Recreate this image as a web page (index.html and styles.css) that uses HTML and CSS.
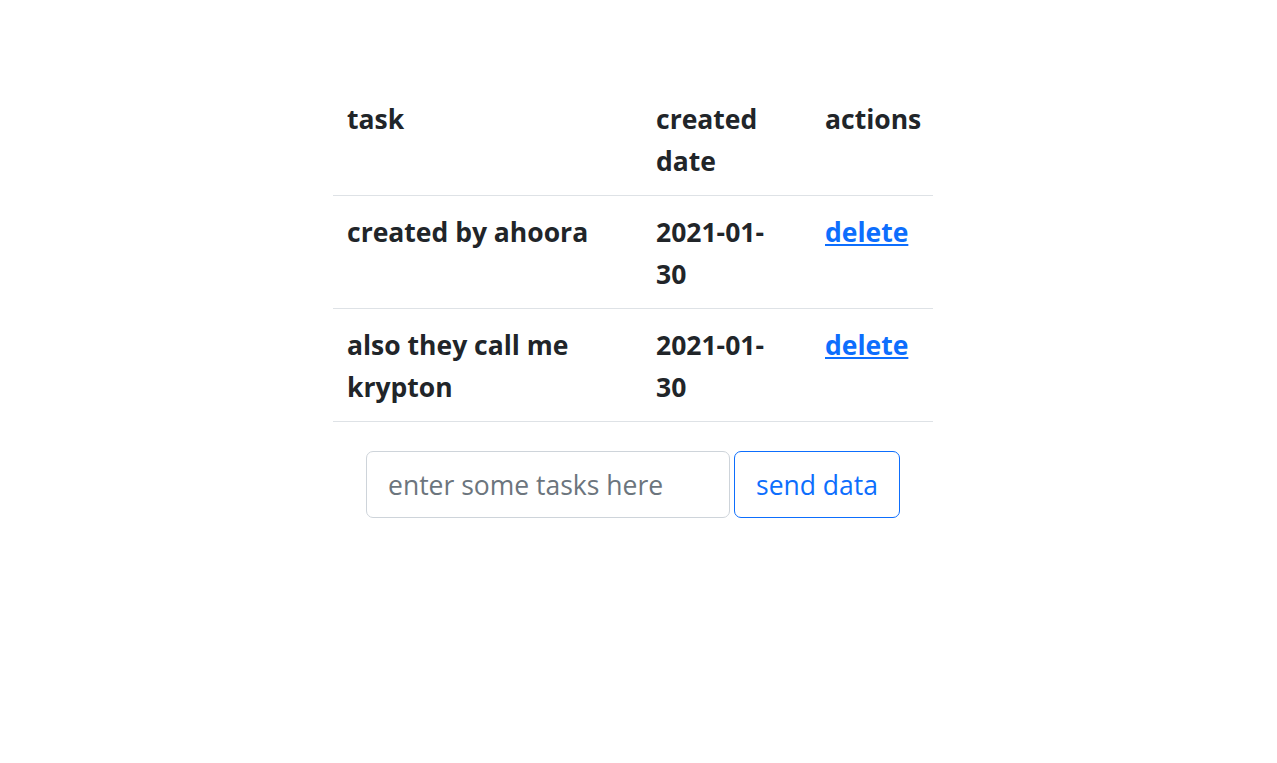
FILE: index.html
```html
<!DOCTYPE html>
<html lang="en">

<head>
    <meta charset="UTF-8" />
    <meta name="viewport" content="width=device-width, initial-scale=1.0" />
    <title>Tasks</title>
    <link rel="stylesheet" href="styles.css">
</head>

<body>
    <div class="page">
        <table class="task-table">
            <thead>
                <tr>
                    <th class="col-task">task</th>
                    <th class="col-date">created date</th>
                    <th class="col-actions">actions</th>
                </tr>
            </thead>
            <tbody>
                <tr>
                    <td>created by ahoora</td>
                    <td class="date">2021-01-30</td>
                    <td><a href="#">delete</a></td>
                </tr>
                <tr>
                    <td>also they call me krypton</td>
                    <td class="date">2021-01-30</td>
                    <td><a href="#">delete</a></td>
                </tr>
            </tbody>
        </table>

        <form class="task-form">
            <input type="text" class="task-input" placeholder="enter some tasks here" />
            <button type="button" class="send-btn">send data</button>
        </form>
    </div>
</body>

</html>
```

FILE: styles.css
```css
body {
    margin: 0;
    font-family: "Open Sans", "Noto Sans", sans-serif;
    font-size: 26.5px;
    line-height: 42px;
    color: #212529;
    background-color: #fff;
}

.page {
    display: flex;
    flex-direction: column;
    align-items: center;
    padding-top: 83px;
    margin-right: 11px;
}

.task-table {
    width: 600px;
    border-collapse: collapse;
    margin-bottom: 29px;
    table-layout: fixed;
}

.task-table th,
.task-table td {
    padding: 15px 14px 13px;
    text-align: left;
    vertical-align: top;
    font-weight: 700;
    border-bottom: 1px solid #dee2e6;
}

.col-task {
    width: 281px;
}

.col-date {
    width: 141px;
}

.col-actions {
    width: 94px;
}

.task-table td.date {
    padding-right: 30px;
}

.task-table a {
    color: #0d6efd;
    text-decoration: underline;
}

.task-form {
    display: flex;
    gap: 4px;
    margin: 0;
}

.task-input {
    width: 364px;
    height: 67px;
    box-sizing: border-box;
    padding: 10px 21px;
    font-family: inherit;
    font-size: 26.5px;
    color: #212529;
    border: 1px solid #ced4da;
    border-radius: 7px;
    outline: none;
}

.task-input::placeholder {
    color: #6c757d;
}

.send-btn {
    width: 166px;
    height: 67px;
    box-sizing: border-box;
    padding: 10px 0;
    font-family: inherit;
    font-size: 26.5px;
    white-space: nowrap;
    color: #0d6efd;
    background: #fff;
    border: 1px solid #0d6efd;
    border-radius: 7px;
    cursor: pointer;
}
```
